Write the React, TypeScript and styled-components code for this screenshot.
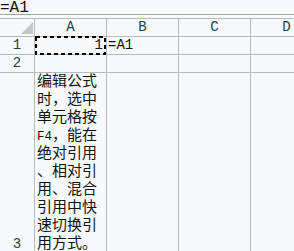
import React from "react";
import styled, { createGlobalStyle } from "styled-components";

const GlobalStyle = createGlobalStyle`
  html, body {
    margin: 0;
    padding: 0;
    background: #f7f9fb;
    overflow: hidden;
  }
  body {
    font-family: "Liberation Mono", "Noto Sans CJK SC", monospace;
    color: #111;
  }
`;

const Page = styled.div`
  width: 294px;
  height: 251px;
  overflow: hidden;
  background: #f7f9fb;
`;

const FormulaBar = styled.div`
  height: 14px;
  line-height: 17px;
  font-size: 16px;
  color: #111;
  white-space: nowrap;
  border-bottom: 1px solid #a4a7ab;
  margin-bottom: 3px;
`;

const Sheet = styled.div`
  display: grid;
  grid-template-columns: 35px 72px 72px 72px 72px;
  grid-template-rows: 18px 18px 18px auto;
  border-top: 1px solid #b6babe;
`;

const Cell = styled.div<{ $align?: "left" | "center" | "right" }>`
  position: relative;
  box-sizing: border-box;
  border-right: 1px solid #b6babe;
  border-bottom: 1px solid #b6babe;
  font-size: 14px;
  line-height: 17px;
  white-space: nowrap;
  text-align: ${(p) => p.$align || "left"};
  padding: 0 3px 0 2px;
`;

const HeadCell = styled(Cell)`
  color: #22403b;
  text-align: center;
  padding: 0;
`;

const Corner = styled(HeadCell)`
  &::after {
    content: "";
    position: absolute;
    right: 1px;
    bottom: 2px;
    width: 0;
    height: 0;
    border-left: 12px solid transparent;
    border-bottom: 12px solid #c4c7cb;
  }
`;

const RowLabel = styled(HeadCell)<{ $bottom?: boolean }>`
  display: flex;
  justify-content: center;
  align-items: ${(p) => (p.$bottom ? "flex-end" : "center")};
  padding-bottom: ${(p) => (p.$bottom ? "1px" : "0")};
`;

const Overflow = styled(Cell)`
  overflow: visible;
  padding-left: 1px;
`;

const TextCell = styled(Cell)`
  padding: 1px 2px 0 2px;
  font-size: 15px;
  line-height: 18px;
`;

const Line = styled.div`
  height: 18px;
`;

const Latin = styled.span`
  font-size: 12.5px;
`;

const Marquee = styled.svg`
  position: absolute;
  left: 0;
  top: -1px;
  width: 71px;
  height: 19px;
  pointer-events: none;
`;

const lines: React.ReactNode[] = [
  "编辑公式",
  "时，选中",
  "单元格按",
  <><Latin>F4</Latin>，能在</>,
  "绝对引用",
  "、相对引",
  "用、混合",
  "引用中快",
  "速切换引",
  "用方式。",
];

export default function App() {
  return (
    <Page>
      <GlobalStyle />
      <FormulaBar>=A1</FormulaBar>
      <Sheet>
        <Corner />
        <HeadCell>A</HeadCell>
        <HeadCell>B</HeadCell>
        <HeadCell>C</HeadCell>
        <HeadCell>D</HeadCell>

        <RowLabel>1</RowLabel>
        <Cell $align="right">
          1
          <Marquee viewBox="0 0 71 19">
            <rect x="1" y="1" width="69" height="17" fill="none" stroke="#000" strokeWidth="2" strokeDasharray="4 3" />
          </Marquee>
        </Cell>
        <Overflow>=A1</Overflow>
        <Cell />
        <Cell />

        <RowLabel>2</RowLabel>
        <Cell />
        <Cell />
        <Cell />
        <Cell />

        <RowLabel $bottom>3</RowLabel>
        <TextCell>
          {lines.map((l, i) => (
            <Line key={i}>{l}</Line>
          ))}
        </TextCell>
        <Cell />
        <Cell />
        <Cell />
      </Sheet>
    </Page>
  );
}
